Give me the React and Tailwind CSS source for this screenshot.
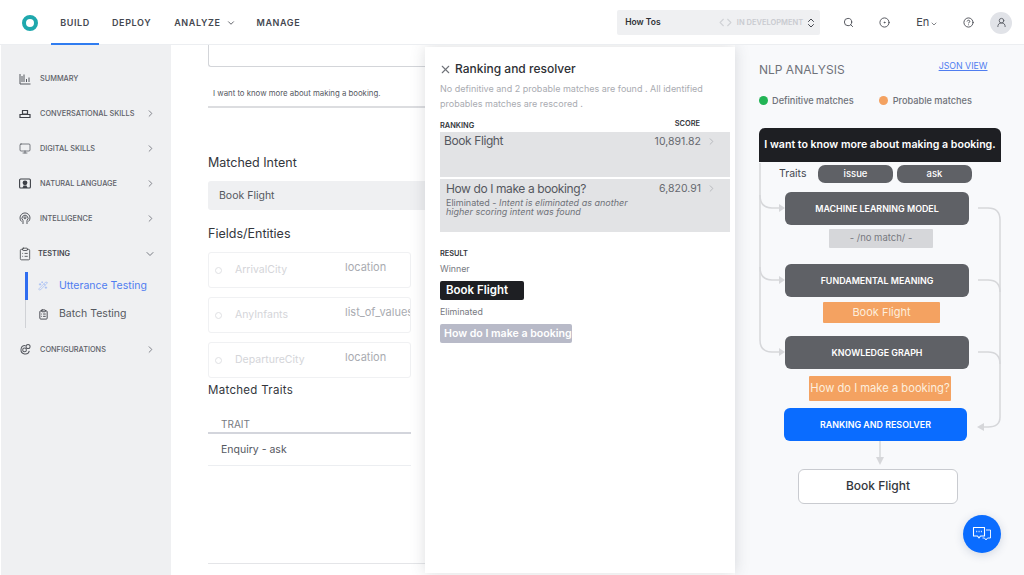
import React from "react";
import {
  Monitor,
  ChevronRight,
  ChevronDown,
  ChevronsUpDown,
  Code,
  Search,
  CircleDot,
  CircleHelp,
  UserRound,
  ClipboardList,
  Wand2,
  X,
} from "lucide-react";

const SummaryIcon = () => (
  <svg width="12" height="12" viewBox="0 0 12 12" fill="none" stroke="#55585f" strokeWidth="1">
    <path d="M1 1v10h10.5M3 3v6M5 1.5V9M7.5 6v3M10 4.5V9" />
  </svg>
);

const SkillsIcon = () => (
  <svg width="12" height="12" viewBox="0 0 12 12" fill="none" stroke="#3d4047" strokeWidth="1.2">
    <path d="M3.5 2.5h5V6h-5zM1 6.5h10v3H1z" />
  </svg>
);

const MonitorIcon = () => <Monitor size={13} strokeWidth={1.3} className="text-[#3d4047]" />;

const LanguageIcon = () => (
  <svg width="12" height="12" viewBox="0 0 12 12" fill="none">
    <rect x="0.6" y="1" width="10.8" height="9" rx="1" stroke="#3d4047" strokeWidth="1.1" />
    <circle cx="6" cy="4.8" r="2.4" fill="#3d4047" />
    <path d="M3.5 10l1-2.5h3l1 2.5z" fill="#3d4047" />
  </svg>
);

const IntelligenceIcon = () => (
  <svg width="12" height="13" viewBox="0 0 12 13" fill="none" stroke="#55585f" strokeWidth="1">
    <path d="M2.5 9.5A5 5 0 1 1 9.5 9.5M4 12V8.5A3 3 0 1 1 8 8.5V12" />
    <circle cx="6" cy="5.8" r="1" />
  </svg>
);

const ConfigIcon = () => (
  <svg width="13" height="13" viewBox="0 0 13 13" fill="none" stroke="#55585f" strokeWidth="1.1">
    <path d="M7 2.2A4.6 4.6 0 1 0 11.2 8" />
    <circle cx="6" cy="7" r="2" />
    <circle cx="9.8" cy="3.2" r="2.2" />
  </svg>
);

const ChatIcon = () => (
  <svg width="20" height="18" viewBox="0 0 20 18" fill="none" stroke="white" strokeWidth="1.1" strokeLinejoin="round">
    <path d="M1.5 2.5h11v8.5H8.5L7 13l-1.5-2H1.5z" />
    <path d="M14 5h4.5v8h-3L14 15l-1.5-2h-2" strokeWidth="0.9" />
    <path d="M4.3 6.5h.9M6.6 6.5h.9M8.9 6.5h.9" strokeWidth="1.3" />
  </svg>
);

const navItems = [
  { label: "SUMMARY", Icon: SummaryIcon },
  { label: "CONVERSATIONAL SKILLS", Icon: SkillsIcon, arrow: true },
  { label: "DIGITAL SKILLS", Icon: MonitorIcon, arrow: true },
  { label: "NATURAL LANGUAGE", Icon: LanguageIcon, arrow: true },
  { label: "INTELLIGENCE", Icon: IntelligenceIcon, arrow: true },
];

const fields = [
  { name: "ArrivalCity", type: "location" },
  { name: "AnyInfants", type: "list_of_values" },
  { name: "DepartureCity", type: "location" },
];

const Header = () => (
  <header className="relative z-20 flex h-[45px] shrink-0 items-center border-b border-[#eceef1] bg-white pl-[22px] pr-[12px] pt-[1px]">
    <div className="h-[16px] w-[16px] shrink-0 rounded-full border-[4px] border-[#1fa8ad]" />
    <nav className="-mb-px ml-[13px] flex items-center self-stretch text-[9px] font-semibold tracking-[0.6px] text-[#44474f]">
      <div className="flex w-[48px] items-center justify-center self-stretch border-b-2 border-[#2f7cf0] pt-[2px]">BUILD</div>
      <div className="ml-[13px]">DEPLOY</div>
      <div className="ml-[23px] flex items-center">
        ANALYZE
        <ChevronDown size={10} className="ml-[5px]" />
      </div>
      <div className="ml-[21px]">MANAGE</div>
    </nav>
    <div className="ml-[317px] flex h-[25px] w-[203px] shrink-0 items-center rounded-[2px] bg-[#eff0f2] pl-[8px] pr-[3px]">
      <span className="text-[8.5px] font-semibold text-[#2e3035]">How Tos</span>
      <Code size={13} className="ml-auto text-[#d0d2d6]" />
      <span className="ml-[5px] whitespace-nowrap text-[7.5px] font-semibold text-[#c9cbd0]">IN DEVELOPMENT</span>
      <ChevronsUpDown size={12} className="ml-[2px] text-[#44474f]" />
    </div>
    <Search size={11} className="ml-[23px] shrink-0 text-[#4b4e55]" />
    <CircleDot size={11} className="ml-[25px] shrink-0 text-[#4b4e55]" />
    <span className="ml-[26px] text-[11px] text-[#44474f]">En</span>
    <ChevronDown size={8} className="ml-[1px] mt-[2px] shrink-0 text-[#44474f]" />
    <CircleHelp size={11} className="ml-[25px] shrink-0 text-[#4b4e55]" />
    <div className="ml-auto flex h-[22px] w-[22px] shrink-0 items-center justify-center rounded-full bg-[#e1e3e8]">
      <UserRound size={11} className="text-[#5c5f67]" />
    </div>
  </header>
);

const SideRow = ({ label, Icon, arrow }) => (
  <div className="flex h-[35px] items-center pl-[18px] pr-[15px]">
    <div className="flex w-[12px] shrink-0 items-center justify-center">
      <Icon />
    </div>
    <span className="ml-[9px] text-[7.35px] font-medium text-[#5d6068]">{label}</span>
    {arrow && <ChevronRight size={11} className="ml-auto text-[#777a82]" />}
  </div>
);

const Sidebar = () => (
  <aside className="ml-[1px] flex w-[170px] shrink-0 flex-col bg-[#eff0f2] pt-[16px]">
    {navItems.map((item) => (
      <SideRow key={item.label} {...item} />
    ))}
    <div className="flex h-[36px] items-center pl-[17px] pr-[15px]">
      <ClipboardList size={14} strokeWidth={1.3} className="text-[#33363c]" />
      <span className="ml-[6px] text-[7.35px] font-semibold text-[#44474f]">TESTING</span>
      <ChevronDown size={12} className="ml-auto text-[#777a82]" />
    </div>
    <div className="ml-[24px] border-l border-[#d0d2d6]">
      <div className="-ml-[1px] flex h-[28px] items-center border-l-[3px] border-[#2f6df0] pl-[10px]">
        <Wand2 size={10} strokeWidth={1.2} className="text-[#7fa3f5]" />
        <span className="ml-[11px] text-[10.5px] text-[#4f7df0]">Utterance Testing</span>
      </div>
      <div className="flex h-[28px] items-center pl-[12px]">
        <ClipboardList size={11} className="text-[#3d4047]" />
        <span className="ml-[10px] text-[10.5px] text-[#55585f]">Batch Testing</span>
      </div>
    </div>
    <div className="mt-[4px]">
      <SideRow label="CONFIGURATIONS" Icon={ConfigIcon} arrow />
    </div>
  </aside>
);

const Content = () => (
  <section className="flex w-[254px] shrink-0 flex-col overflow-hidden bg-white pl-[37px]">
    <div className="h-[22px] w-[230px] shrink-0 rounded-b-[3px] border-b border-l border-[#d3d5d9]" />
    <p className="mt-[20px] w-[230px] whitespace-nowrap pl-[5px] text-[7.8px] leading-[12px] text-[#55585f]">
      I want to know more about making a booking.
    </p>
    <div className="mt-[7px] h-[2px] w-[230px] shrink-0 bg-[#dcdde0]" />
    <h3 className="mt-[46px] text-[12.5px] leading-[18px] text-[#33363c]">Matched Intent</h3>
    <div className="mt-[9px] flex h-[29px] w-[230px] shrink-0 items-center rounded-[3px] bg-[#eff0f2] pl-[11px] text-[10.5px] text-[#55585f]">
      Book Flight
    </div>
    <h3 className="mt-[15px] text-[12.5px] leading-[18px] text-[#33363c]">Fields/Entities</h3>
    <div className="mt-[9px] flex w-[203px] flex-col gap-[9px]">
      {fields.map((f) => (
        <div key={f.name} className="flex h-[36px] items-center overflow-hidden rounded-[3px] border border-[#f0f1f3] pl-[6px]">
          <div className="h-[7px] w-[7px] shrink-0 rounded-full border border-[#e0e1e4]" />
          <span className="ml-[13px] w-[110px] shrink-0 text-[10.5px] text-[#d4d5d9]">{f.name}</span>
          <span className="-mt-[5px] whitespace-nowrap text-[11px] text-[#a9abb1]">{f.type}</span>
        </div>
      ))}
    </div>
    <h3 className="mt-[4px] text-[11.5px] leading-[16px] tracking-[0.3px] text-[#33363c]">Matched Traits</h3>
    <div className="mt-[19px] w-[203px] border-b-2 border-[#d3d5dc] pb-[1px] pl-[13px] text-[10px] leading-[14px] text-[#777a82]">
      TRAIT
    </div>
    <div className="flex h-[32px] w-[203px] shrink-0 items-center border-b border-[#eceef1] pl-[13px] text-[10.5px] text-[#55585f]">
      Enquiry - ask
    </div>
    <div className="mt-[97px] h-px w-[230px] shrink-0 bg-[#e4e5e8]" />
  </section>
);

const RankRow = ({ title, score, className, children }) => (
  <div className={`relative bg-[#e2e3e5] ${className}`}>
    <div className="absolute right-[13px] top-[2px] flex items-center text-[10.5px] text-[#66696f]">
      {score}
      <ChevronRight size={11} className="ml-[5px] text-[#b4b6ba]" />
    </div>
    <div className="text-[12px] leading-[16px] tracking-[-0.4px] text-[#55585f]">{title}</div>
    {children}
  </div>
);

const Drawer = () => (
  <section className="relative z-10 my-[2px] w-[310px] shrink-0 bg-white pl-[15px] pr-[5px] pt-[14px] shadow-[0_0_14px_rgba(60,65,80,0.18)]">
    <div className="flex items-center">
      <X size={13} className="-ml-[1px] text-[#6f7279]" />
      <h2 className="ml-[3px] text-[12px] font-medium leading-[16px] text-[#2e3035]">Ranking and resolver</h2>
    </div>
    <p className="mt-[4px] text-[9px] leading-[15px] text-[#a9abb1]">
      No definitive and 2 probable matches are found . All identified
      <br />
      probables matches are rescored .
    </p>
    <div className="mt-[9px] flex items-end justify-between pr-[30px] text-[7.4px] font-semibold leading-[11px] text-[#33363c]">
      <span>RANKING</span>
      <span className="-translate-y-[2px]">SCORE</span>
    </div>
    <RankRow title="Book Flight" score="10,891.82" className="mt-[1px] h-[45px] pl-[4px] pt-[1px]" />
    <RankRow title="How do I make a booking?" score="6,820.91" className="mt-[2px] h-[53px] pl-[6px] pt-[2px]">
      <p className="mt-[1px] text-[9px] leading-[9px] text-[#6f7279]">
        Eliminated - <i>Intent is eliminated as another</i>
        <br />
        <i>higher scoring intent was found</i>
      </p>
    </RankRow>
    <div className="mt-[17px] text-[7.4px] font-semibold leading-[9px] text-[#33363c]">RESULT</div>
    <div className="mt-[5px] text-[8.8px] leading-[12px] text-[#77797f]">Winner</div>
    <div className="mt-[6px] flex h-[19px] w-[84px] items-center rounded-[2px] bg-[#1e1f23] pl-[6px] text-[11.5px] font-semibold text-white">
      Book Flight
    </div>
    <div className="mt-[6px] text-[8.8px] leading-[12px] text-[#77797f]">Eliminated</div>
    <div className="mt-[6px] flex h-[19px] w-[132px] items-center whitespace-nowrap rounded-[2px] bg-[#b8bac8] pl-[4px] text-[10.6px] font-semibold text-white">
      How do I make a booking
    </div>
  </section>
);

const Step = ({ label, className }) => (
  <div className={`flex h-[33px] items-center justify-center rounded-[6px] text-[8.9px] font-semibold text-white ${className}`}>
    {label}
  </div>
);

// grey connector lines behind the flow boxes
const Connectors = () => (
  <svg className="absolute left-0 top-[2px]" width="289" height="530" fill="none">
    <g stroke="#d6d7da" strokeWidth="1.5">
      <path d="M25 116V293q0 12 12 12h7" />
      <path d="M25 148q0 13 12 13h7" />
      <path d="M25 220q0 13 12 13h7" />
      <path d="M243 161h10q12 0 12 12V370q0 10 -12 10h-5" />
      <path d="M243 233h10q12 0 12 12" />
      <path d="M243 305h10q12 0 12 12" />
      <path d="M145 394v16" />
    </g>
    <g fill="#d6d7da">
      <path d="M44 157l6 4-6 4z" />
      <path d="M44 229l6 4-6 4z" />
      <path d="M44 301l6 4-6 4z" />
      <path d="M249 376l-7 4 7 4z" />
      <path d="M141 410h8l-4 8z" />
    </g>
  </svg>
);

const Analysis = () => (
  <section className="relative min-w-0 flex-1 bg-[#f8f9fb]">
    <Connectors />
    <div className="relative pl-[24px] pt-[16px]">
      <div className="flex items-start">
        <h2 className="text-[12px] leading-[18px] text-[#6f7279]">NLP ANALYSIS</h2>
        <a className="-mt-[2px] ml-[94px] whitespace-nowrap text-[8.8px] leading-[14px] text-[#4f7df0] underline">JSON VIEW</a>
      </div>
      <div className="mt-[15px] flex items-center text-[9.2px] font-medium text-[#6f7279]">
        <span className="h-[9px] w-[9px] rounded-full bg-[#22b455]" />
        <span className="ml-[4px]">Definitive matches</span>
        <span className="ml-[25px] h-[9px] w-[9px] rounded-full bg-[#f4a261]" />
        <span className="ml-[5px]">Probable matches</span>
      </div>
      <div className="mt-[20px] flex h-[34px] w-[242px] items-center justify-center whitespace-nowrap rounded-t-[6px] bg-[#1e1f23] text-[10.6px] font-semibold text-white">
        I want to know more about making a booking.
      </div>
      <div className="mt-[3px] flex items-center">
        <span className="ml-[20px] w-[39px] text-[10.5px] text-[#44474f]">Traits</span>
        <span className="flex h-[18px] w-[75px] items-center justify-center rounded-[7px] bg-[#5f6166] text-[9.5px] font-medium text-white">issue</span>
        <span className="ml-[4px] flex h-[18px] w-[75px] items-center justify-center rounded-[7px] bg-[#5f6166] text-[9.5px] font-medium text-white">ask</span>
      </div>
      <Step label="MACHINE LEARNING MODEL" className="ml-[26px] mt-[9px] w-[184px] bg-[#5f6166]" />
      <div className="ml-[70px] mt-[4px] flex h-[19px] w-[104px] items-center justify-center rounded-[1px] bg-[#d6d7da] text-[9.5px] text-[#77797f]">
        - /no match/ -
      </div>
      <Step label="FUNDAMENTAL MEANING" className="ml-[26px] mt-[16px] w-[184px] bg-[#5f6166]" />
      <div className="ml-[64px] mt-[5px] flex h-[21px] w-[117px] items-center justify-center rounded-[1px] bg-[#f4a261] text-[11px] text-[#fdeedd]">
        Book Flight
      </div>
      <Step label="KNOWLEDGE GRAPH" className="ml-[26px] mt-[13px] w-[184px] bg-[#5f6166]" />
      <div className="ml-[50px] mt-[7px] flex h-[25px] w-[142px] items-center justify-center whitespace-nowrap rounded-[1px] bg-[#f4a261] text-[11.2px] text-[#fdeedd]">
        How do I make a booking?
      </div>
      <Step label="RANKING AND RESOLVER" className="ml-[25px] mt-[7px] w-[183px] bg-[#0a6cff]" />
      <div className="ml-[39px] mt-[28px] flex h-[35px] w-[160px] items-center justify-center rounded-[6px] border border-[#c9cbd0] bg-white text-[12px] font-medium text-[#33363c]">
        Book Flight
      </div>
    </div>
    <button className="absolute bottom-[22px] right-[23px] flex h-[38px] w-[38px] items-center justify-center rounded-full bg-[#0a6cff] shadow-[0_2px_10px_rgba(40,60,110,0.18)]">
      <ChatIcon />
    </button>
  </section>
);

export default function App() {
  return (
    <div className="flex h-[575px] w-[1024px] flex-col overflow-hidden bg-white font-['Inter',sans-serif]">
      <Header />
      <main className="flex min-h-0 flex-1">
        <Sidebar />
        <Content />
        <Drawer />
        <Analysis />
      </main>
    </div>
  );
}
